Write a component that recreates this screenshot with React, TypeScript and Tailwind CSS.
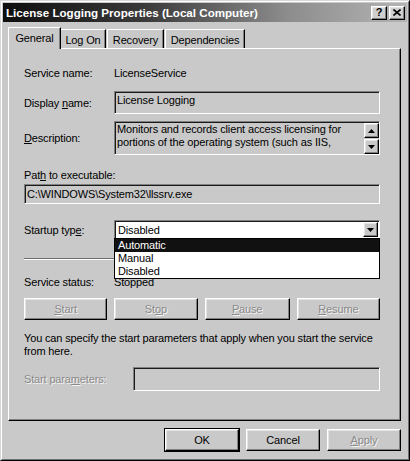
const raised =
  "border border-t-white border-l-white border-r-black border-b-black shadow-[inset_-1px_-1px_0_#808080,inset_1px_1px_0_#e4e4e4]";
const sunken =
  "border border-t-[#808080] border-l-[#808080] border-r-white border-b-white shadow-[inset_1px_1px_0_#1a1a1a]";
const dis = "text-[#8a8a8a] [text-shadow:1px_1px_0_#f4f4f4]";
const tab =
  "h-[19px] pt-[3px] text-center border border-b-0 border-t-white border-l-white border-r-black shadow-[inset_-1px_0_0_#808080]";

function Arrow({ up }: { up?: boolean }) {
  return (
    <svg width="7" height="4" viewBox="0 0 7 4">
      {up ? <polygon points="0,4 7,4 3.5,0" fill="#000" /> : <polygon points="0,0 7,0 3.5,4" fill="#000" />}
    </svg>
  );
}

function Btn({ children, w, disabled, def }: { children: React.ReactNode; w: number; disabled?: boolean; def?: boolean }) {
  return (
    <div
      className={`h-[22px] flex items-center justify-center ${def ? "outline outline-1 outline-black" : ""} ${raised} ${disabled ? dis : ""}`}
      style={{ width: w }}
    >
      {children}
    </div>
  );
}

export default function App() {
  return (
    <div className="w-[410px] h-[461px] bg-[#c9c9c9] font-['Liberation_Sans',Arial,sans-serif] text-[11px] tracking-[-0.15px] leading-[14px] text-black border border-t-[#d8d8d8] border-l-[#d8d8d8] border-r-black border-b-black">
      <div className="h-full border border-t-white border-l-white border-r-[#707070] border-b-[#707070] p-[1px] flex flex-col">
        {/* title bar */}
        <div className="h-[19px] flex items-center pl-[3px] pr-[2px] bg-[linear-gradient(to_right,#0e0e0e,#3a3a3a_35%,#8c8c8c_70%,#b4b4b4)]">
          <div className="text-white font-bold text-[11.6px] tracking-normal flex-1">License Logging Properties (Local Computer)</div>
          <div className={`w-[16px] h-[14px] bg-[#cfcfcf] flex items-center justify-center font-bold text-[11px] leading-none ${raised}`}>?</div>
          <div className={`ml-[2px] w-[16px] h-[14px] bg-[#cfcfcf] flex items-center justify-center ${raised}`}>
            <svg width="8" height="7" viewBox="0 0 8 7">
              <path d="M0.5 0.5 L7.5 6.5 M7.5 0.5 L0.5 6.5" stroke="#000" strokeWidth="1.6" />
            </svg>
          </div>
        </div>

        <div className="flex-1 px-[5px] pt-[5px]">
          {/* tabs */}
          <div className="flex items-end h-[21px] relative z-10">
            <div className="h-[22px] w-[53px] pt-[3px] text-center border border-b-0 border-t-white border-l-white border-r-black shadow-[inset_-1px_0_0_#808080] bg-[#c9c9c9] mb-[-1px]">
              General
            </div>
            <div className={`${tab} w-[45px] border-l-0`}>Log On</div>
            <div className={`${tab} w-[57px] ml-[1px]`}>Recovery</div>
            <div className={`${tab} w-[80px] ml-[1px]`}>Dependencies</div>
          </div>

          {/* panel */}
          <div className="h-[373px] w-[393px] border border-t-white border-l-white border-r-black border-b-black shadow-[inset_-1px_-1px_0_#808080] pl-[15px] pr-[20px] relative">
            <div className="flex items-center h-[14px] mt-[17px]">
              <div className="w-[90px]">Service name:</div>
              <div>LicenseService</div>
            </div>

            <div className="flex items-center mt-[11px]">
              <div className="w-[90px]">
                Display <span className="underline">n</span>ame:
              </div>
              <div className={`flex-1 h-[23px] px-[2px] pt-[1px] ${sunken}`}>License Logging</div>
            </div>

            <div className="flex items-center mt-[7px]">
              <div className="w-[90px]">
                <span className="underline">D</span>escription:
              </div>
              <div className={`flex-1 h-[34px] pl-[2px] pt-[1px] flex ${sunken}`}>
                <div className="flex-1 leading-[13px]">
                  Monitors and records client access licensing for portions of the operating system (such as IIS,
                </div>
                <div className="flex flex-col justify-between">
                  <div className={`w-[15px] h-[15px] flex items-center justify-center ${raised}`}>
                    <Arrow up />
                  </div>
                  <div className={`w-[15px] h-[15px] flex items-center justify-center ${raised}`}>
                    <Arrow />
                  </div>
                </div>
              </div>
            </div>

            <div className="mt-[13px]">
              Pat<span className="underline">h</span> to executable:
            </div>
            <div className={`mt-[2px] h-[20px] px-[2px] pt-[2px] ${sunken}`}>C:\WINDOWS\System32\llssrv.exe</div>

            <div className="flex items-center mt-[16px] relative">
              <div className="w-[90px]">
                Startup typ<span className="underline">e</span>:
              </div>
              <div className={`flex-1 h-[19px] bg-white flex items-center pl-[3px] ${sunken}`}>
                <div className="flex-1">Disabled</div>
                <div className={`w-[15px] h-[15px] bg-[#c9c9c9] flex items-center justify-center mr-[1px] ${raised}`}>
                  <Arrow />
                </div>
              </div>
              <div className="absolute left-[90px] right-0 top-[18px] bg-white border border-black z-20">
                <div className="bg-[#111] text-white pl-[3px] h-[13px] leading-[13px]">Automatic</div>
                <div className="pl-[3px] h-[13px] leading-[13px]">Manual</div>
                <div className="pl-[3px] h-[13px] leading-[13px]">Disabled</div>
              </div>
            </div>

            <div className="mt-[19px] h-[2px] border-t border-t-[#707070] border-b border-b-white" />

            <div className="flex items-center mt-[15px]">
              <div className="w-[90px]">Service status:</div>
              <div>Stopped</div>
            </div>

            <div className="flex mt-[9px] gap-[7px]">
              <Btn w={84} disabled>
                <span className="underline">S</span>tart
              </Btn>
              <Btn w={84} disabled>
                St<span className="underline">o</span>p
              </Btn>
              <Btn w={86} disabled>
                <span className="underline">P</span>ause
              </Btn>
              <Btn w={84} disabled>
                <span className="underline">R</span>esume
              </Btn>
            </div>

            <div className="mt-[12px] leading-[13px] w-[362px]">
              You can specify the start parameters that apply when you start the service from here.
            </div>

            <div className="flex items-center mt-[9px]">
              <div className={`w-[109px] ${dis}`}>
                Start para<span className="underline">m</span>eters:
              </div>
              <div className={`flex-1 h-[24px] ${sunken}`} />
            </div>
          </div>

          {/* bottom buttons */}
          <div className="flex justify-end gap-[7px] mt-[8px] pr-[1px]">
            <Btn w={74} def>
              OK
            </Btn>
            <Btn w={74}>Cancel</Btn>
            <Btn w={74} disabled>
              <span className="underline">A</span>pply
            </Btn>
          </div>
        </div>
      </div>
    </div>
  );
}
